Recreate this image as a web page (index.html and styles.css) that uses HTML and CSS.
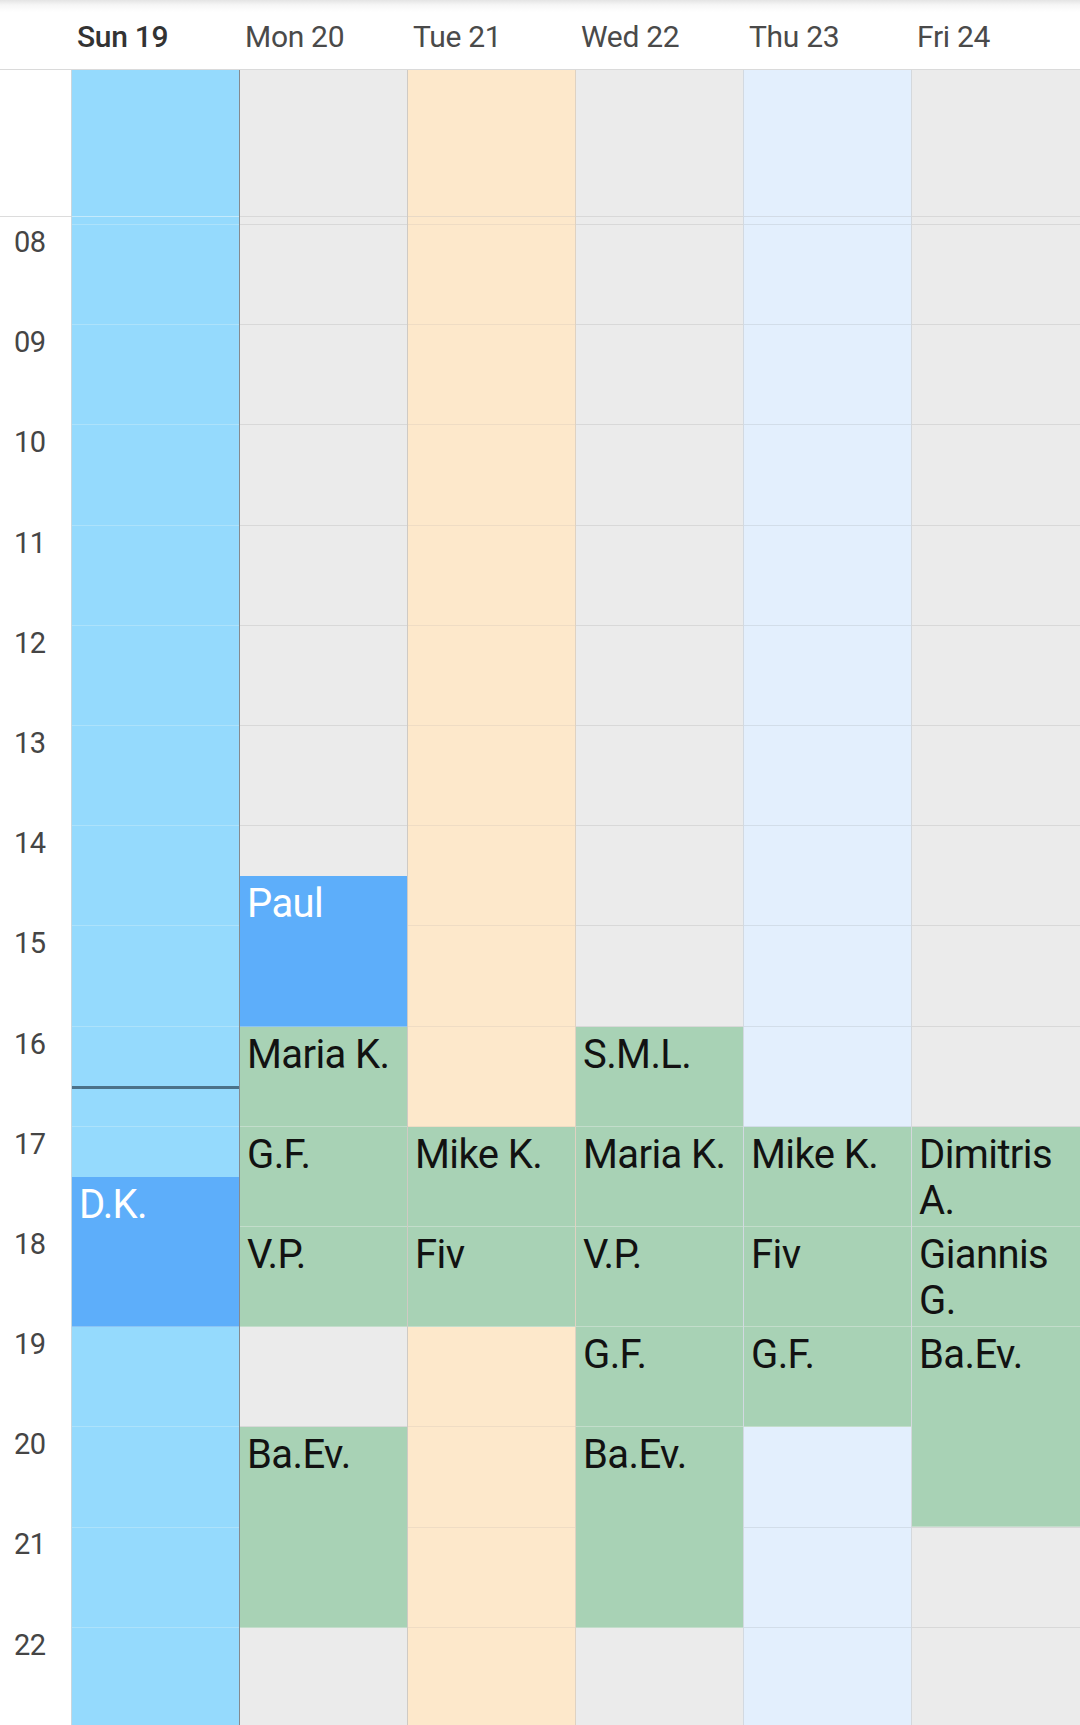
FILE: index.html
```html
<!DOCTYPE html>
<html>
<head>
<meta charset="utf-8">
<link rel="stylesheet" href="styles.css">
</head>
<body>
<div class="app">
  <div class="header">
    <div class="corner"></div>
    <div class="day-label today">Sun 19</div>
    <div class="day-label">Mon 20</div>
    <div class="day-label">Tue 21</div>
    <div class="day-label">Wed 22</div>
    <div class="day-label">Thu 23</div>
    <div class="day-label">Fri 24</div>
  </div>
  <div class="body">
    <div class="gutter">
      <div class="allday"></div>
      <div class="spacer"></div>
      <div class="times">
        <div class="time">08</div>
        <div class="time">09</div>
        <div class="time">10</div>
        <div class="time">11</div>
        <div class="time">12</div>
        <div class="time">13</div>
        <div class="time">14</div>
        <div class="time">15</div>
        <div class="time">16</div>
        <div class="time">17</div>
        <div class="time">18</div>
        <div class="time">19</div>
        <div class="time">20</div>
        <div class="time">21</div>
        <div class="time">22</div>
      </div>
    </div>

    <div class="day sun">
      <div class="allday"></div>
      <div class="spacer"></div>
      <div class="hours">
        <div class="event blue" style="grid-row: 20 / 23">D.K.</div>
        <div class="now-line"></div>
      </div>
    </div>

    <div class="day mon">
      <div class="allday"></div>
      <div class="spacer"></div>
      <div class="hours">
        <div class="event blue" style="grid-row: 14 / 17">Paul</div>
        <div class="event green" style="grid-row: 17 / 19">Maria K.</div>
        <div class="event green" style="grid-row: 19 / 21">G.F.</div>
        <div class="event green" style="grid-row: 21 / 23">V.P.</div>
        <div class="event green" style="grid-row: 25 / 29">Ba.Ev.</div>
      </div>
    </div>

    <div class="day tue">
      <div class="allday"></div>
      <div class="spacer"></div>
      <div class="hours">
        <div class="event green" style="grid-row: 19 / 21">Mike K.</div>
        <div class="event green" style="grid-row: 21 / 23">Fiv</div>
      </div>
    </div>

    <div class="day wed">
      <div class="allday"></div>
      <div class="spacer"></div>
      <div class="hours">
        <div class="event green" style="grid-row: 17 / 19">S.M.L.</div>
        <div class="event green" style="grid-row: 19 / 21">Maria K.</div>
        <div class="event green" style="grid-row: 21 / 23">V.P.</div>
        <div class="event green" style="grid-row: 23 / 25">G.F.</div>
        <div class="event green" style="grid-row: 25 / 29">Ba.Ev.</div>
      </div>
    </div>

    <div class="day thu">
      <div class="allday"></div>
      <div class="spacer"></div>
      <div class="hours">
        <div class="event green" style="grid-row: 19 / 21">Mike K.</div>
        <div class="event green" style="grid-row: 21 / 23">Fiv</div>
        <div class="event green" style="grid-row: 23 / 25">G.F.</div>
      </div>
    </div>

    <div class="day fri">
      <div class="allday"></div>
      <div class="spacer"></div>
      <div class="hours">
        <div class="event green" style="grid-row: 19 / 21">Dimitris A.</div>
        <div class="event green" style="grid-row: 21 / 23">Giannis G.</div>
        <div class="event green" style="grid-row: 23 / 27">Ba.Ev.</div>
      </div>
    </div>
  </div>
</div>
</body>
</html>
```
FILE: styles.css
```css
html, body {
  margin: 0;
  padding: 0;
}
body {
  width: 1080px;
  height: 1725px;
  overflow: hidden;
  background: #ffffff;
  font-family: Roboto, "Noto Sans", "Liberation Sans", sans-serif;
}
.app {
  width: 1080px;
  height: 1725px;
  display: flex;
  flex-direction: column;
  overflow: hidden;
}

/* Header */
.header {
  display: flex;
  height: 69px;
  border-bottom: 1px solid #dadada;
  background: linear-gradient(to bottom, #e4e4e4 0px, #f6f6f6 5px, #ffffff 12px);
  flex: none;
}
.corner {
  width: 71px;
  flex: none;
}
.day-label {
  width: 168px;
  flex: none;
  box-sizing: border-box;
  padding-left: 6px;
  padding-top: 4px;
  line-height: 65px;
  font-size: 30px;
  color: #4a4a4a;
  letter-spacing: -0.3px;
}
.day-label.today {
  color: #333333;
  font-weight: 500;
}

/* Body grid */
.body {
  display: flex;
  flex: 1;
  min-height: 0;
  overflow: hidden;
}
.gutter {
  width: 71px;
  flex: none;
  background: #ffffff;
  display: flex;
  flex-direction: column;
}
.gutter .allday {
  flex: none;
  height: 146px;
  border-bottom: 1px solid #dcdcdc;
}
.gutter .spacer {
  flex: none;
  height: 8px;
}
.times {
  flex: none;
  display: flex;
  flex-direction: column;
}
.time {
  flex: none;
  height: 100.2px;
  box-sizing: border-box;
  padding-left: 14px;
  padding-top: 3px;
  font-size: 29px;
  line-height: 29px;
  color: #454545;
  letter-spacing: -0.5px;
}

.day {
  width: 168px;
  flex: none;
  box-sizing: border-box;
  border-left: 1px solid var(--edge);
  background: var(--bg);
  display: flex;
  flex-direction: column;
  overflow: hidden;
}
.day:last-child {
  flex: 1;
}
.day .allday {
  flex: none;
  height: 146px;
  border-bottom: 1px solid var(--top-line);
}
.day .spacer {
  flex: none;
  height: 7px;
  border-bottom: 1px solid var(--line);
}
.hours {
  flex: none;
  position: relative;
  display: grid;
  grid-template-columns: 100%;
  grid-template-rows: repeat(30, 50.1px);
  background-image: repeating-linear-gradient(to bottom,
    transparent 0px, transparent 99.2px,
    var(--line) 99.2px, var(--line) 100.2px);
}

.sun { --bg: #95dafd; --line: #ade2fb; --top-line: #c4eafc; --edge: #c9d6dd; }
.mon { --bg: #ebebeb; --line: #d8d8d8; --top-line: #d8d8d8; --edge: #858a8e; }
.tue { --bg: #fde8cb; --line: #efdcc4; --top-line: #e8d9c6; --edge: #cfcac4; }
.wed { --bg: #ebebeb; --line: #d8d8d8; --top-line: #d8d8d8; --edge: #dfd2c2; }
.thu { --bg: #e3effd; --line: #d2dde9; --top-line: #d2dbe6; --edge: #d2d9e1; }
.fri { --bg: #ebebeb; --line: #d8d8d8; --top-line: #d8d8d8; --edge: #d4d8dc; }

/* Events */
.event {
  grid-column: 1;
  box-sizing: border-box;
  padding: 5px 4px 0 7px;
  font-size: 40px;
  line-height: 46px;
  letter-spacing: -0.6px;
  overflow: hidden;
}
.event.green {
  background: #a8d2b5;
  color: #121212;
  border-bottom: 1px solid #c3ddcb;
}
.event.blue {
  background: #5daefa;
  color: #ffffff;
  border-bottom: 1px solid #8cc4f4;
}

.now-line {
  position: absolute;
  left: 0;
  right: 0;
  top: 861px;
  height: 3px;
  background: #4b7189;
}
```
